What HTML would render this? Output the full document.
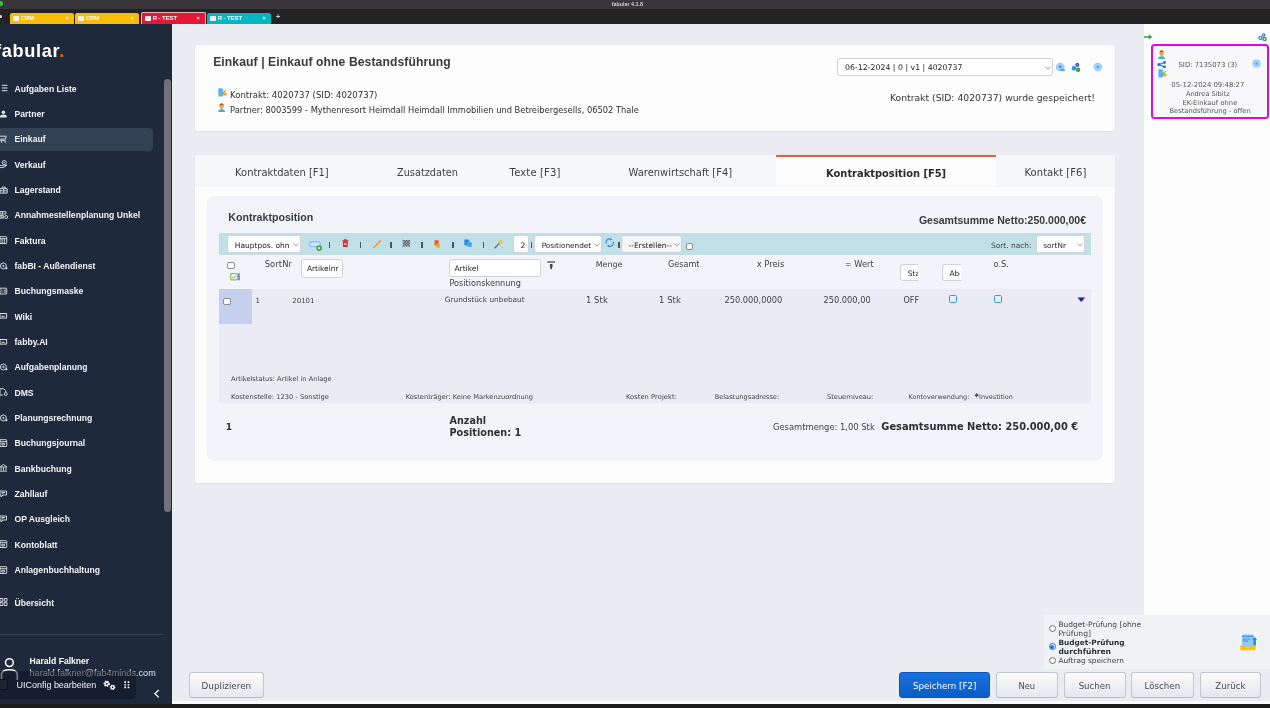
<!DOCTYPE html>
<html lang="de">
<head>
<meta charset="utf-8">
<title>fabular 4.1.8</title>
<style>
*{box-sizing:border-box;margin:0;padding:0}
html,body{width:1270px;height:708px;overflow:hidden;background:#ebecf1}
body{position:relative;font-family:"DejaVu Sans","Liberation Sans",sans-serif;color:#404040;font-size:9px}
.abs{position:absolute}
#wrap{position:absolute;left:0;top:0;width:1270px;height:708px;overflow:hidden;will-change:transform}
.lib{font-family:"Liberation Sans",sans-serif}
/* ---------- window chrome ---------- */
#titlebar{left:0;top:0;width:1270px;height:9px;background:#38353b}
#titlebar span{position:absolute;left:0;width:1270px;top:0;text-align:center;font:bold 5px/8px "Liberation Sans",sans-serif;color:#d8d8d8}
#tabbar{left:0;top:9px;width:1270px;height:15px;background:#232323}
.wtab{position:absolute;top:13px;height:11px;width:64px;border-radius:2px 2px 0 0;font:bold 6px/11.500px "Liberation Sans",sans-serif;color:#fff;letter-spacing:-0.100px}
.wtab i{position:absolute;left:3.200px;top:2.700px;width:5.800px;height:5.800px;background:linear-gradient(90deg,#f0f0f0 30%,#c9c9c9 30%,#c9c9c9 37%,#f0f0f0 37%,#f0f0f0 63%,#c9c9c9 63%,#c9c9c9 70%,#f0f0f0 70%);border-radius:0.800px}
.wtab b{position:absolute;left:10.800px;top:0}
.wtab u{position:absolute;right:5.500px;top:0;text-decoration:none;font-size:5.500px}
#bottombar{left:0;top:704.300px;width:1270px;height:4px;background:#1b1b1b}
/* ---------- sidebar ---------- */
#side{left:0;top:24px;width:172px;height:680.300px;background:#1e293b;overflow:hidden}
#logo{left:-5px;top:15px;font:bold 20px/22px "Liberation Sans",sans-serif;color:#fff;letter-spacing:-0.2px}
#logo em{color:#f26a1b;font-style:normal}
.mi{position:absolute;left:14px;font:bold 9px/12px "Liberation Sans",sans-serif;color:#f4f6f9;white-space:nowrap}
.ic{position:absolute;left:0.800px;width:7px;height:8px;overflow:visible}
#active{left:-4px;top:104px;width:157px;height:23px;background:#334155;border-radius:4px}
#sb{left:164px;top:55px;width:7px;height:433px;background:#6f7277;border-radius:4px}
#sbtrack{left:163px;top:24px;width:9px;height:585px;background:#1c2636}
#sep{left:0;top:609.800px;width:163px;height:1px;background:#334155}

/* ---------- main ---------- */
.card{position:absolute;background:#fdfdfd;border-radius:4px;box-shadow:0 1px 3px rgba(0,0,0,.05)}
.t{position:absolute;white-space:nowrap}
.sel{position:absolute;background:#fff;border:1px solid #cfd3d9;border-radius:3px;white-space:nowrap;overflow:hidden;font-size:7.5px;color:#222}
.inp{position:absolute;background:#fff;border:1px solid #cfd3d9;border-radius:3px;white-space:nowrap;overflow:hidden;font-size:7.5px;color:#222}
.btn{position:absolute;top:672.300px;height:25.400px;border:1px solid #c2c6ce;border-bottom-color:#b6bbc5;border-radius:3px;background:linear-gradient(#fbfbfc,#e5e7ec);font-size:9.5px;line-height:23px;text-align:center;color:#333}
.tab{position:absolute;top:155px;height:31px;line-height:33px;font-size:11px;text-align:center;color:#333;white-space:nowrap}
.rb{position:absolute;width:7.400px;height:7.400px;border:1px solid #767676;border-radius:50%;background:#fff}
.cb{position:absolute;width:7.400px;height:7.400px;border:1px solid #8c8c8c;border-radius:2px;background:#fff}
.sep{position:absolute;top:241.900px;width:1.600px;height:6.100px;background:#50555c}
</style>
</head>
<body>
<div id="wrap">
<div id="titlebar" class="abs"></div>
<div id="tabbar" class="abs"></div>
<div class="abs" style="left:-2.200px;top:1.200px;width:5.200px;height:5.200px;background:#2fc840;border-radius:50%"></div>
<div class="abs" style="left:0;top:15px;width:2px;height:3px;background:#ddd;border-radius:0 2px 2px 0"></div>
<div class="wtab" style="left:10px;background:#fbbc05"><i></i><b>CRM</b><u>×</u></div>
<div class="wtab" style="left:75px;background:#fbbc05"><i></i><b>CRM</b><u>×</u></div>
<div class="wtab" style="left:141px;top:11.5px;height:12.5px;width:65px;background:#e31837;border:1px solid #f3b6c0;border-bottom:0;line-height:11px"><i style="top:3.200px"></i><b>R - TEST</b><u>×</u></div>
<div class="wtab" style="left:207px;background:#00b7c3"><i></i><b>R - TEST</b><u>×</u></div>
<div class="abs lib" style="left:276px;top:13.300px;font:bold 7px/8px 'Liberation Sans',sans-serif;color:#ddd">+</div>

<!-- SIDEBAR -->
<div id="side" class="abs">
  <div id="active" class="abs"></div>
  <div id="sb" class="abs"></div>
  <div id="sep" class="abs"></div>
  <svg class="ic" style="top:60.3px" viewBox="0 0 7 8"><path d="M0.800 1.300h5.600M0.800 4h5.600M0.800 6.700h5.600" stroke="#dfe4ea" stroke-width="1" fill="none"/></svg>
  <svg class="ic" style="top:85.6px" viewBox="0 0 7 8"><circle cx="2.400" cy="2.200" r="1.700" fill="#dfe4ea"/><path d="M-1 7.600v-1c0-1.400 1.700-2.100 3.400-2.100s3.400 0.700 3.400 2.100v1z" fill="#dfe4ea"/></svg>
  <svg class="ic" style="top:111.0px" viewBox="0 0 7 8"><path d="M-1 1.200h6.300l-0.900 2.900h-5M0.300 4.100l-0.600 1.500h5" stroke="#dfe4ea" stroke-width="0.900" fill="none"/><circle cx="0.500" cy="7" r="0.750" fill="#dfe4ea"/><circle cx="4.300" cy="7" r="0.750" fill="#dfe4ea"/></svg>
  <svg class="ic" style="top:136.3px" viewBox="0 0 7 8"><circle cx="3.200" cy="2.600" r="2.100" stroke="#dfe4ea" stroke-width="0.900" fill="none"/><path d="M-1 5.500h2.500l1.500 0.700l2.800-1.200M-1 7.500c2.500 0.500 5-0.500 6.800-2.500" stroke="#dfe4ea" stroke-width="0.900" fill="none"/><path d="M2.300 2.600h1.800" stroke="#dfe4ea" stroke-width="0.800"/></svg>
  <svg class="ic" style="top:161.6px" viewBox="0 0 7 8"><path d="M-1 2.600h7.200v4.500h-7.200zM1.200 2.600v-1.600h3v1.600M-1 4.800h7.200M2.700 2.600v4.500" stroke="#dfe4ea" stroke-width="0.900" fill="none"/></svg>
  <svg class="ic" style="top:187.0px" viewBox="0 0 7 8"><path d="M-1 0.600h5.800v2.400h-5.800zM-1 4.600h3.400v2.500h-3.400zM1.600 0.600v2.400M0.800 4.600v2.500" stroke="#dfe4ea" stroke-width="0.900" fill="none"/><circle cx="5.200" cy="6" r="1.500" stroke="#dfe4ea" stroke-width="0.900" fill="none"/></svg>
  <svg class="ic" style="top:212.3px" viewBox="0 0 7 8"><path d="M-1 0.700h6.100c0.400 0 0.600 0.200 0.600 0.600v5.600c0 0.400-0.200 0.600-0.600 0.600h-6.100zM-1 2.700h6.600M1.100 2.700v4.800M3.300 2.700v4.800" stroke="#dfe4ea" stroke-width="0.900" fill="none"/></svg>
  <svg class="ic" style="top:237.6px" viewBox="0 0 7 8"><circle cx="2.400" cy="4" r="3" stroke="#dfe4ea" stroke-width="0.900" fill="none"/><path d="M1.200 4h2.400M2.400 2.800v2.400" stroke="#dfe4ea" stroke-width="0.800" fill="none"/><circle cx="5.500" cy="6.200" r="1" fill="#dfe4ea"/></svg>
  <svg class="ic" style="top:263.0px" viewBox="0 0 7 8"><path d="M-1 1.200h6.100c0.400 0 0.600 0.200 0.600 0.600v4.600c0 0.400-0.200 0.600-0.600 0.600h-6.100zM0.300 3.200h1.200M2.700 3.200h2.300M0.300 5h1.200M2.700 5h2.300" stroke="#dfe4ea" stroke-width="0.900" fill="none"/></svg>
  <svg class="ic" style="top:288.3px" viewBox="0 0 7 8"><path d="M-1 1.500h6.600v4.600h-6.600zM0.600 4.300h3" stroke="#dfe4ea" stroke-width="1" fill="none"/></svg>
  <svg class="ic" style="top:313.6px" viewBox="0 0 7 8"><path d="M-1 1.500h6.600v4.600h-6.600zM0.600 4.300h3" stroke="#dfe4ea" stroke-width="1" fill="none"/></svg>
  <svg class="ic" style="top:339.0px" viewBox="0 0 7 8"><circle cx="2.400" cy="4" r="3" stroke="#dfe4ea" stroke-width="0.900" fill="none"/><path d="M1.200 4h2.400M2.400 2.800v2.400" stroke="#dfe4ea" stroke-width="0.800" fill="none"/><circle cx="5.500" cy="6.200" r="1" fill="#dfe4ea"/></svg>
  <svg class="ic" style="top:364.3px" viewBox="0 0 7 8"><path d="M-1 0.800h3.800l2 2v1.200M-1 0.800v6.300h2.800" stroke="#dfe4ea" stroke-width="0.900" fill="none"/><circle cx="4.700" cy="6" r="1.500" stroke="#dfe4ea" stroke-width="0.900" fill="none"/></svg>
  <svg class="ic" style="top:389.6px" viewBox="0 0 7 8"><circle cx="2.400" cy="4" r="3" stroke="#dfe4ea" stroke-width="0.900" fill="none"/><path d="M1.200 4h2.400M2.400 2.800v2.400" stroke="#dfe4ea" stroke-width="0.800" fill="none"/><circle cx="5.500" cy="6.200" r="1" fill="#dfe4ea"/></svg>
  <svg class="ic" style="top:415.0px" viewBox="0 0 7 8"><path d="M-1 0.700h6.100c0.400 0 0.600 0.200 0.600 0.600v5.600c0 0.400-0.200 0.600-0.600 0.600h-6.100zM-1 2.700h6.600M0.800 4.300h2.600v1.700h-2.600z" stroke="#dfe4ea" stroke-width="0.900" fill="none"/></svg>
  <svg class="ic" style="top:440.3px" viewBox="0 0 7 8"><path d="M-1 3l3.500-2.500l3.500 2.500zM0 3.500v3M2.500 3.500v3M5 3.500v3M-1 7.200h7" stroke="#dfe4ea" stroke-width="0.900" fill="none"/></svg>
  <svg class="ic" style="top:465.6px" viewBox="0 0 7 8"><path d="M-1 1h6.500v4h-3.500l-2 2v-2h-1zM0.500 2.500h3.500M0.500 3.800h2" stroke="#dfe4ea" stroke-width="0.900" fill="none"/></svg>
  <svg class="ic" style="top:491.0px" viewBox="0 0 7 8"><path d="M-1 1h6.500v4h-3.500l-2 2v-2h-1zM0.500 2.500h3.500M0.500 3.800h2" stroke="#dfe4ea" stroke-width="0.900" fill="none"/></svg>
  <svg class="ic" style="top:516.3px" viewBox="0 0 7 8"><path d="M-1 0.700h6.100c0.400 0 0.600 0.200 0.600 0.600v5.600c0 0.400-0.200 0.600-0.600 0.600h-6.100zM-1 2.700h6.600M0.800 4.300h2.600v1.700h-2.600z" stroke="#dfe4ea" stroke-width="0.900" fill="none"/></svg>
  <svg class="ic" style="top:541.6px" viewBox="0 0 7 8"><path d="M-1 0.700h6.100c0.400 0 0.600 0.200 0.600 0.600v5.600c0 0.400-0.200 0.600-0.600 0.600h-6.100zM-1 2.700h6.600M0.800 4.300h2.600v1.700h-2.600z" stroke="#dfe4ea" stroke-width="0.900" fill="none"/></svg>
  <svg class="ic" style="top:574.3px" viewBox="0 0 7 8"><path d="M-1 0.500h2.800v2.800h-2.800zM3.200 0.500h2.800v2.800h-2.800zM-1 4.700h2.800v2.800h-2.800zM3.200 4.700h2.800v2.800h-2.800z" stroke="#dfe4ea" stroke-width="0.900" fill="none"/></svg>
  <svg class="abs" style="left:0;top:632px;width:20px;height:24px" viewBox="0 0 20 24"><circle cx="9.400" cy="6.600" r="3.900" stroke="#f1f5f9" stroke-width="1.600" fill="none"/><path d="M1.500 24v-5.500c0-3.200 2.800-4.700 7.900-4.700s7.900 1.500 7.900 4.700v5.500" stroke="#f1f5f9" stroke-width="1.600" fill="none"/></svg>
</div>

<!-- header card -->
<div class="card" style="left:195px;top:44.600px;width:920px;height:86.200px"></div>
<div class="sel" style="left:837px;top:58px;width:216px;height:18px"></div>

<!-- tab card -->
<div class="card" style="left:195px;top:155px;width:920px;height:328px"></div>
<div class="abs" style="left:195px;top:155px;width:920px;height:31.500px;background:#f6f7f9;border-radius:4px 4px 0 0"></div>
<div class="abs" style="left:776.300px;top:154.800px;width:220px;height:31.700px;background:#fdfdfd;border-top:2.500px solid #e0623a"></div>

<!-- inner panel -->
<div class="abs" style="left:207px;top:196px;width:895.500px;height:265px;background:#f3f4f9;border-radius:7px"></div>
<!-- toolbar -->
<div class="abs" style="left:219px;top:233px;width:872px;height:22px;background:#c1dfe7"></div>
<div class="sel" style="left:227px;top:235px;width:74px;height:18px"></div>
<div class="sep" style="left:328.8px"></div><div class="sep" style="left:359.7px"></div><div class="sep" style="left:390.4px"></div><div class="sep" style="left:421.2px"></div><div class="sep" style="left:452.0px"></div><div class="sep" style="left:482.5px"></div>
<div class="inp" style="left:513px;top:235px;width:16px;height:18px"></div>
<div class="sep" style="left:530.900px"></div>
<div class="sel" style="left:534.200px;top:235px;width:67.800px;height:18px"></div>
<div class="sep" style="left:618.100px"></div>
<div class="sel" style="left:621.200px;top:235px;width:60.700px;height:18px;background:#f4f5f7"></div>
<div class="cb" style="left:685.600px;top:242.500px"></div>
<div class="sel" style="left:1035.600px;top:235px;width:49.400px;height:18px"></div>
<!-- header row -->
<div class="cb" style="left:227.400px;top:262px"></div>
<div class="inp" style="left:301.300px;top:259.300px;width:42px;height:18.300px"></div>
<div class="inp" style="left:449.200px;top:258.500px;width:92.200px;height:18.200px"></div>
<div class="inp" style="left:899.600px;top:263.700px;width:18.300px;height:17.800px;border-right:0;border-radius:3px 0 0 3px"></div>
<div class="inp" style="left:942.300px;top:263.700px;width:18.300px;height:17.800px;border-right:0;border-radius:3px 0 0 3px"></div>
<!-- data row -->
<div class="abs" style="left:219px;top:289.300px;width:872px;height:113.400px;background:#ebebf5"></div>
<div class="abs" style="left:219px;top:289.300px;width:33.100px;height:34.700px;background:#c5cfee"></div>
<div class="cb" style="left:223.300px;top:298px"></div>
<div class="abs" style="left:949.100px;top:295.200px;width:8.200px;height:8.200px;border:1.700px solid #3097ee;border-radius:1.500px;background:#e3f0fd"></div>
<div class="abs" style="left:994.200px;top:295.200px;width:8.200px;height:8.200px;border:1.700px solid #3097ee;border-radius:1.500px;background:#e3f0fd"></div>
<svg class="abs" style="left:1076.500px;top:296.500px;width:9px;height:6px" viewBox="0 0 9 6"><path d="M0.500 0.500h7.600l-3.800 4.600z" fill="#1c1ca8"/></svg>

<!-- right panel -->
<div class="abs" style="left:1143.500px;top:24px;width:127px;height:590.700px;background:#fdfdfd"></div>
<div class="abs" style="left:1151.200px;top:43.800px;width:118px;height:75.300px;border:2.100px solid #e208df;border-radius:3.500px;background:#f8f8fa"></div>

<!-- budget panel -->
<div class="abs" style="left:1043.500px;top:614.700px;width:227px;height:54.700px;background:#f1f2f6"></div>
<div class="rb" style="left:1048.600px;top:624.900px"></div>
<div class="rb" style="left:1048.600px;top:642.900px;border-color:#1a6fe0"></div>
<div class="abs" style="left:1050.300px;top:644.600px;width:4px;height:4px;border-radius:50%;background:#1a6fe0"></div>
<div class="rb" style="left:1048.600px;top:656.800px"></div>

<!-- buttons -->
<div class="btn" style="left:189px;width:74.600px"></div>
<div class="btn" style="left:899px;width:90.600px;background:linear-gradient(#1873e0,#0c5bc6);border-color:#0c56ba"></div>
<div class="btn" style="left:995.800px;width:62px"></div>
<div class="btn" style="left:1063.700px;width:62px"></div>
<div class="btn" style="left:1131.400px;width:62.200px"></div>
<div class="btn" style="left:1199.700px;width:61.700px"></div>

<svg class="abs" style="left:1044.60px;top:65.60px;width:6px;height:4px" viewBox="0 0 6 4"><path d="M0.500 0.600l2.500 2.500l2.500-2.500" fill="none" stroke="#85898f" stroke-width="0.850"/></svg>
<svg class="abs" style="left:292.60px;top:242.60px;width:6px;height:4px" viewBox="0 0 6 4"><path d="M0.500 0.600l2.500 2.500l2.500-2.500" fill="none" stroke="#85898f" stroke-width="0.850"/></svg>
<svg class="abs" style="left:593.60px;top:242.60px;width:6px;height:4px" viewBox="0 0 6 4"><path d="M0.500 0.600l2.500 2.500l2.500-2.500" fill="none" stroke="#85898f" stroke-width="0.850"/></svg>
<svg class="abs" style="left:673.50px;top:242.60px;width:6px;height:4px" viewBox="0 0 6 4"><path d="M0.500 0.600l2.500 2.500l2.500-2.500" fill="none" stroke="#85898f" stroke-width="0.850"/></svg>
<svg class="abs" style="left:1076.60px;top:242.60px;width:6px;height:4px" viewBox="0 0 6 4"><path d="M0.500 0.600l2.500 2.500l2.500-2.500" fill="none" stroke="#85898f" stroke-width="0.850"/></svg>
<div class="t" style="left:213.20px;top:55.01px;font-size:12.14px;line-height:15.79px;letter-spacing:0.099px;font-family:'Liberation Sans',sans-serif;font-weight:bold;color:#3a3a3a">Einkauf | Einkauf ohne Bestandsführung</div>
<div class="t" style="left:230.00px;top:89.71px;font-size:8.50px;line-height:11.05px;letter-spacing:0.024px;color:#2e2e2e">Kontrakt: 4020737 (SID: 4020737)</div>
<div class="t" style="left:230.00px;top:104.51px;font-size:8.30px;line-height:10.79px;color:#2e2e2e">Partner: 8003599 - Mythenresort Heimdall Heimdall Immobilien und Betreibergesells, 06502 Thale</div>
<div class="t" style="left:845.00px;top:63.20px;font-size:7.79px;line-height:10.13px;letter-spacing:0.012px;color:#222">06-12-2024 | 0 | v1 | 4020737</div>
<div class="t" style="left:889.90px;top:91.71px;font-size:9.25px;line-height:12.02px;color:#333">Kontrakt (SID: 4020737) wurde gespeichert!</div>
<div class="t" style="left:235.10px;top:166.81px;font-size:9.94px;line-height:12.92px">Kontraktdaten [F1]</div>
<div class="t" style="left:397.00px;top:166.81px;font-size:9.75px;line-height:12.67px">Zusatzdaten</div>
<div class="t" style="left:509.60px;top:165.81px;font-size:10.02px;line-height:13.02px;letter-spacing:0.137px">Texte [F3]</div>
<div class="t" style="left:628.50px;top:166.81px;font-size:9.95px;line-height:12.94px">Warenwirtschaft [F4]</div>
<div class="t" style="left:826.10px;top:167.80px;font-size:9.90px;line-height:12.87px;font-weight:bold;color:#2b2b2b">Kontraktposition [F5]</div>
<div class="t" style="left:1024.50px;top:165.81px;font-size:10.02px;line-height:13.02px;letter-spacing:0.037px">Kontakt [F6]</div>
<div class="t" style="left:228.30px;top:210.81px;font-size:10.63px;line-height:13.81px;font-family:'Liberation Sans',sans-serif;font-weight:bold;color:#3a3a3a">Kontraktposition</div>
<div class="t" style="left:918.90px;top:213.81px;font-size:10.52px;line-height:13.67px;font-family:'Liberation Sans',sans-serif;font-weight:bold;color:#3a3a3a">Gesamtsumme Netto:250.000,00€</div>
<div class="t" style="left:990.90px;top:240.61px;font-size:7.48px;line-height:9.73px">Sort. nach:</div>
<div class="t" style="left:264.70px;top:259.42px;font-size:8.40px;line-height:10.92px;letter-spacing:0.069px">SortNr</div>
<div class="t" style="left:449.40px;top:278.30px;font-size:8.18px;line-height:10.63px">Positionskennung</div>
<div class="t" style="left:595.70px;top:260.41px;font-size:7.94px;line-height:10.32px">Menge</div>
<div class="t" style="left:668.00px;top:259.41px;font-size:8.10px;line-height:10.53px">Gesamt</div>
<div class="t" style="left:756.70px;top:259.42px;font-size:8.40px;line-height:10.92px">x Preis</div>
<div class="t" style="left:844.80px;top:259.40px;font-size:8.22px;line-height:10.68px">= Wert</div>
<div class="t" style="left:993.50px;top:259.41px;font-size:8.31px;line-height:10.81px">o.S.</div>
<div class="t" style="left:255.40px;top:295.70px;font-size:7.07px;line-height:9.19px">1</div>
<div class="t" style="left:292.20px;top:295.70px;font-size:7.04px;line-height:9.15px">20101</div>
<div class="t" style="left:444.80px;top:294.90px;font-size:7.35px;line-height:9.55px">Grundstück unbebaut</div>
<div class="t" style="left:585.90px;top:295.11px;font-size:8.40px;line-height:10.92px;letter-spacing:0.099px">1 Stk</div>
<div class="t" style="left:659.00px;top:295.11px;font-size:8.40px;line-height:10.92px;letter-spacing:0.099px">1 Stk</div>
<div class="t" style="left:724.40px;top:295.11px;font-size:8.25px;line-height:10.72px">250.000,0000</div>
<div class="t" style="left:823.40px;top:295.31px;font-size:8.28px;line-height:10.76px">250.000,00</div>
<div class="t" style="left:903.50px;top:296.10px;font-size:8.05px;line-height:10.47px">OFF</div>
<div class="t" style="left:231.10px;top:374.60px;font-size:6.65px;line-height:8.65px">Artikelstatus: Artikel in Anlage</div>
<div class="t" style="left:231.10px;top:392.81px;font-size:6.68px;line-height:8.68px;letter-spacing:0.011px">Kostenstelle: 1230 - Sonstige</div>
<div class="t" style="left:405.70px;top:392.81px;font-size:6.65px;line-height:8.64px">Kostenträger: Keine Markenzuordnung</div>
<div class="t" style="left:625.90px;top:392.81px;font-size:6.68px;line-height:8.68px;letter-spacing:0.079px">Kosten Projekt:</div>
<div class="t" style="left:714.70px;top:392.81px;font-size:6.60px;line-height:8.58px">Belastungsadresse:</div>
<div class="t" style="left:827.00px;top:392.81px;font-size:6.63px;line-height:8.61px">Steuerniveau:</div>
<div class="t" style="left:908.50px;top:392.81px;font-size:6.48px;line-height:8.43px">Kontoverwendung: <b style="font-size:1.3em;line-height:0;position:relative;top:0.2em;margin:0 0.02em 0 0.35em;color:#2f2f2f">*</b>Investition</div>
<div class="t" style="left:225.70px;top:422.21px;font-size:9.11px;line-height:11.85px;font-weight:bold;color:#2f2f2f">1</div>
<div class="t" style="left:449.50px;top:415.40px;font-size:9.64px;line-height:12.53px;font-weight:bold;color:#2f2f2f">Anzahl</div>
<div class="t" style="left:449.50px;top:426.62px;font-size:9.69px;line-height:12.59px;font-weight:bold;color:#2f2f2f">Positionen: 1</div>
<div class="t" style="left:773.00px;top:421.90px;font-size:8.37px;line-height:10.88px">Gesamtmenge: 1,00 Stk</div>
<div class="t" style="left:881.30px;top:421.20px;font-size:9.86px;line-height:12.82px;font-weight:bold;color:#2f2f2f">Gesamtsumme Netto: 250.000,00 €</div>
<div class="t" style="left:1178.50px;top:60.52px;font-size:6.88px;line-height:8.95px;color:#555">SID: 7135073 (3)</div>
<div class="t" style="left:1171.30px;top:81.22px;font-size:6.88px;line-height:8.95px;color:#555">05-12-2024 09:48:27</div>
<div class="t" style="left:1185.90px;top:89.71px;font-size:6.61px;line-height:8.59px;color:#555">Andrea Sibitz</div>
<div class="t" style="left:1182.50px;top:98.70px;font-size:6.68px;line-height:8.68px;letter-spacing:0.069px;color:#555">EK-Einkauf ohne</div>
<div class="t" style="left:1169.50px;top:107.20px;font-size:6.68px;line-height:8.68px;letter-spacing:0.018px;color:#555">Bestandsführung - offen</div>
<div class="t" style="left:1058.40px;top:619.71px;font-size:7.49px;line-height:9.73px">Budget-Prüfung [ohne</div>
<div class="t" style="left:1058.40px;top:628.61px;font-size:7.59px;line-height:9.87px;letter-spacing:0.022px">Prüfung]</div>
<div class="t" style="left:1058.40px;top:637.81px;font-size:7.35px;line-height:9.56px;font-weight:bold;color:#2f2f2f">Budget-Prüfung</div>
<div class="t" style="left:1058.40px;top:646.71px;font-size:7.55px;line-height:9.81px;font-weight:bold;color:#2f2f2f">durchführen</div>
<div class="t" style="left:1058.40px;top:656.40px;font-size:7.36px;line-height:9.57px">Auftrag speichern</div>
<div class="t" style="left:201.60px;top:680.60px;font-size:8.78px;line-height:11.41px;color:#434a59">Duplizieren</div>
<div class="t" style="left:912.90px;top:680.61px;font-size:8.70px;line-height:11.31px;color:#fff">Speichern [F2]</div>
<div class="t" style="left:1018.50px;top:680.61px;font-size:8.31px;line-height:10.81px;color:#434a59">Neu</div>
<div class="t" style="left:1078.70px;top:680.61px;font-size:8.56px;line-height:11.13px;color:#434a59">Suchen</div>
<div class="t" style="left:1144.60px;top:680.61px;font-size:8.67px;line-height:11.27px;color:#434a59">Löschen</div>
<div class="t" style="left:1215.30px;top:680.60px;font-size:8.62px;line-height:11.2px;color:#434a59">Zurück</div>
<div class="t" style="left:234.80px;top:240.60px;font-size:7.50px;line-height:9.75px;color:#222;overflow:hidden;width:54.80px">Hauptpos. ohne</div>
<div class="t" style="left:520.50px;top:240.61px;font-size:7.59px;line-height:9.87px;color:#222">2</div>
<div class="t" style="left:541.70px;top:240.61px;font-size:7.31px;line-height:9.5px;color:#222">Positionendet</div>
<div class="t" style="left:628.50px;top:240.61px;font-size:7.48px;line-height:9.72px;color:#222;overflow:hidden;width:47.00px">--Erstellen--</div>
<div class="t" style="left:1043.30px;top:240.60px;font-size:7.33px;line-height:9.53px;color:#222">sortNr</div>
<div class="t" style="left:307.00px;top:264.11px;font-size:7.42px;line-height:9.64px;color:#222">Artikelnr</div>
<div class="t" style="left:454.40px;top:263.71px;font-size:7.56px;line-height:9.83px;color:#222">Artikel</div>
<div class="t" style="left:907.70px;top:269.01px;font-size:7.50px;line-height:9.75px;color:#222;overflow:hidden;width:10.20px">Status</div>
<div class="t" style="left:949.40px;top:269.01px;font-size:7.50px;line-height:9.75px;color:#222;overflow:hidden;width:11.00px">Abg</div>
<div class="t" style="left:14.50px;top:83.61px;font-size:8.60px;line-height:11.18px;font-family:'Liberation Sans',sans-serif;font-weight:bold;color:#f3f5f8">Aufgaben Liste</div>
<div class="t" style="left:14.50px;top:108.94px;font-size:8.60px;line-height:11.18px;font-family:'Liberation Sans',sans-serif;font-weight:bold;color:#f3f5f8">Partner</div>
<div class="t" style="left:14.50px;top:134.27px;font-size:8.60px;line-height:11.18px;font-family:'Liberation Sans',sans-serif;font-weight:bold;color:#f3f5f8">Einkauf</div>
<div class="t" style="left:14.50px;top:159.61px;font-size:8.60px;line-height:11.18px;font-family:'Liberation Sans',sans-serif;font-weight:bold;color:#f3f5f8">Verkauf</div>
<div class="t" style="left:14.50px;top:184.93px;font-size:8.60px;line-height:11.18px;font-family:'Liberation Sans',sans-serif;font-weight:bold;color:#f3f5f8">Lagerstand</div>
<div class="t" style="left:14.50px;top:210.27px;font-size:8.60px;line-height:11.18px;font-family:'Liberation Sans',sans-serif;font-weight:bold;color:#f3f5f8">Annahmestellenplanung Unkel</div>
<div class="t" style="left:14.50px;top:235.61px;font-size:8.60px;line-height:11.18px;font-family:'Liberation Sans',sans-serif;font-weight:bold;color:#f3f5f8">Faktura</div>
<div class="t" style="left:14.50px;top:260.93px;font-size:8.60px;line-height:11.18px;font-family:'Liberation Sans',sans-serif;font-weight:bold;color:#f3f5f8">fabBI - Außendienst</div>
<div class="t" style="left:14.50px;top:286.27px;font-size:8.60px;line-height:11.18px;font-family:'Liberation Sans',sans-serif;font-weight:bold;color:#f3f5f8">Buchungsmaske</div>
<div class="t" style="left:14.50px;top:311.61px;font-size:8.60px;line-height:11.18px;font-family:'Liberation Sans',sans-serif;font-weight:bold;color:#f3f5f8">Wiki</div>
<div class="t" style="left:14.50px;top:336.93px;font-size:8.60px;line-height:11.18px;font-family:'Liberation Sans',sans-serif;font-weight:bold;color:#f3f5f8">fabby.AI</div>
<div class="t" style="left:14.50px;top:362.27px;font-size:8.60px;line-height:11.18px;font-family:'Liberation Sans',sans-serif;font-weight:bold;color:#f3f5f8">Aufgabenplanung</div>
<div class="t" style="left:14.50px;top:387.61px;font-size:8.60px;line-height:11.18px;font-family:'Liberation Sans',sans-serif;font-weight:bold;color:#f3f5f8">DMS</div>
<div class="t" style="left:14.50px;top:412.93px;font-size:8.60px;line-height:11.18px;font-family:'Liberation Sans',sans-serif;font-weight:bold;color:#f3f5f8">Planungsrechnung</div>
<div class="t" style="left:14.50px;top:438.27px;font-size:8.60px;line-height:11.18px;font-family:'Liberation Sans',sans-serif;font-weight:bold;color:#f3f5f8">Buchungsjournal</div>
<div class="t" style="left:14.50px;top:463.60px;font-size:8.60px;line-height:11.18px;font-family:'Liberation Sans',sans-serif;font-weight:bold;color:#f3f5f8">Bankbuchung</div>
<div class="t" style="left:14.50px;top:488.93px;font-size:8.60px;line-height:11.18px;font-family:'Liberation Sans',sans-serif;font-weight:bold;color:#f3f5f8">Zahllauf</div>
<div class="t" style="left:14.50px;top:514.26px;font-size:8.60px;line-height:11.18px;font-family:'Liberation Sans',sans-serif;font-weight:bold;color:#f3f5f8">OP Ausgleich</div>
<div class="t" style="left:14.50px;top:539.60px;font-size:8.60px;line-height:11.18px;font-family:'Liberation Sans',sans-serif;font-weight:bold;color:#f3f5f8">Kontoblatt</div>
<div class="t" style="left:14.50px;top:564.92px;font-size:8.60px;line-height:11.18px;font-family:'Liberation Sans',sans-serif;font-weight:bold;color:#f3f5f8">Anlagenbuchhaltung</div>
<div class="t" style="left:14.50px;top:597.61px;font-size:8.60px;line-height:11.18px;font-family:'Liberation Sans',sans-serif;font-weight:bold;color:#f3f5f8">Übersicht</div>
<div class="t" style="left:-4.90px;top:39.91px;font-size:18.20px;line-height:23.66px;font-family:'Liberation Sans',sans-serif;font-weight:bold;color:#fff"><span style="letter-spacing:0.640px">fabular</span><span style="color:#fb5d08;margin-left:-1.100px">.</span></div>
<div class="t" style="left:29.50px;top:656.30px;font-size:8.61px;line-height:11.19px;font-family:'Liberation Sans',sans-serif;font-weight:bold;color:#fff">Harald Falkner</div>
<div class="t" style="left:29.50px;top:668.31px;font-size:9.11px;line-height:11.84px;letter-spacing:0.008px;font-family:'Liberation Sans',sans-serif;color:#e4e7ec">harald.falkner@fab4minds.com</div>
<div class="abs" style="left:0;top:671px;width:136px;height:27.700px;background:rgba(14,21,34,0.520);border-radius:0 4px 4px 0"></div>
<div class="abs" style="left:-3px;top:679px;width:10.600px;height:10.800px;border:1px solid #0c1018;border-radius:2px;background:#1d2534"></div>
<svg class="abs" style="left:103px;top:679.500px;width:13.500px;height:11px" viewBox="0 0 13.500 11"><circle cx="3.700" cy="3.700" r="2.300" fill="none" stroke="#fff" stroke-width="1.700" stroke-dasharray="1.200 0.850"/><circle cx="3.700" cy="3.700" r="1.700" fill="none" stroke="#fff" stroke-width="1.300"/><circle cx="9.600" cy="7.300" r="2" fill="none" stroke="#fff" stroke-width="1.500" stroke-dasharray="1.050 0.750"/><circle cx="9.600" cy="7.300" r="1.500" fill="none" stroke="#fff" stroke-width="1.100"/></svg>
<svg class="abs" style="left:124px;top:681.300px;width:6px;height:8px" viewBox="0 0 6 8"><g fill="#fff"><rect x="0.300" y="0.300" width="1.700" height="1.700" rx="0.300"/><rect x="3.600" y="0.300" width="1.700" height="1.700" rx="0.300"/><rect x="0.300" y="2.900" width="1.700" height="1.700" rx="0.300"/><rect x="3.600" y="2.900" width="1.700" height="1.700" rx="0.300"/><rect x="0.300" y="5.500" width="1.700" height="1.700" rx="0.300"/><rect x="3.600" y="5.500" width="1.700" height="1.700" rx="0.300"/></g></svg>
<svg class="abs" style="left:153px;top:688.500px;width:8px;height:9.500px" viewBox="0 0 8 9.500"><path d="M5.800 1l-3.900 3.700l3.900 3.700" stroke="#fff" stroke-width="1.300" fill="none"/></svg>
<div class="t" style="left:16.50px;top:679.91px;font-size:8.98px;line-height:11.68px;font-family:'Liberation Sans',sans-serif;color:#eef1f5">UIConfig bearbeiten</div>
<div class="t" style="left:611.80px;top:0.71px;font-size:5.35px;line-height:6.95px;font-family:'Liberation Sans',sans-serif;font-weight:bold;color:#d4d4d4">fabular 4.1.8</div>


<!-- header icons -->
<svg class="abs" style="left:218px;top:88.400px;width:9.500px;height:9px" viewBox="0 0 9.500 9"><path d="M0.300 0.200h3.700l1.200 1.200v7.100h-4.900z" fill="#64b5f6"/><path d="M1 1.500h2.500M1 3h2.500" stroke="#42a5f5" stroke-width="0.700"/><path d="M3.200 6.800c0.800-1.500 2.600-2.800 4-2.500c1 0.300 1.700 1.200 1.800 2.200c-0.800 1.200-3.500 1.500-5.800 0.300z" fill="#ffa726"/><path d="M3.200 6.600l4.300-4.100" stroke="#43a047" stroke-width="0.900" stroke-linecap="round"/></svg>
<svg class="abs" style="left:218.400px;top:102.800px;width:7.200px;height:9px" viewBox="0 0 7.200 9"><path d="M0.200 9c0-2 1.200-2.700 3.400-2.700s3.400 0.700 3.400 2.700z" fill="#29b6f6"/><path d="M2.800 5h1.600v1.600l-0.800 0.700l-0.800-0.700z" fill="#fb8c00"/><circle cx="3.600" cy="3.400" r="2.100" fill="#ffa726"/><path d="M1.500 3c0-1.800 0.900-2.800 2.100-2.800s2.100 1 2.100 2.800c-0.700-0.900-1.400-1.300-2.100-1.300s-1.400 0.400-2.100 1.300z" fill="#8d4e1f"/></svg>
<svg class="abs" style="left:1055.200px;top:62.200px;width:11px;height:10.500px" viewBox="0 0 11 10.500"><circle cx="5.200" cy="5" r="4.300" fill="#90caf9"/><circle cx="5.200" cy="5" r="2.800" fill="none" stroke="#bbdefb" stroke-width="0.700"/><circle cx="5.200" cy="4.800" r="1.200" fill="#2f8fea"/><path d="M6.200 8.100h3.100" stroke="#2196f3" stroke-width="1.500" stroke-linecap="round"/></svg>
<svg class="abs" style="left:1071.050px;top:62.100px;width:11px;height:11px" viewBox="0 0 11 11"><circle cx="6.300" cy="2.900" r="1.200" fill="none" stroke="#5c55c8" stroke-width="1.700"/><circle cx="2.900" cy="6.300" r="1.300" fill="none" stroke="#2196f3" stroke-width="1.900"/><circle cx="7.100" cy="7.700" r="1.300" fill="none" stroke="#43a047" stroke-width="2"/></svg>
<svg class="abs" style="left:1093px;top:62.100px;width:10px;height:10px" viewBox="0 0 10 10"><circle cx="4.900" cy="5" r="4.200" fill="#90caf9"/><circle cx="4.900" cy="5" r="2.700" fill="none" stroke="#bbdefb" stroke-width="0.700"/><circle cx="4.900" cy="4.900" r="1.100" fill="#3d9bf0"/></svg>

<!-- toolbar icons -->
<svg class="abs" style="left:309px;top:240.500px;width:14px;height:11px" viewBox="0 0 14 11"><rect x="0.900" y="0.900" width="10.300" height="4.800" rx="1.100" fill="#cfe6f6" stroke="#7cbcf7" stroke-width="1.100"/><circle cx="10.100" cy="7.100" r="2.800" fill="#43a047"/><circle cx="10.100" cy="7.100" r="1.100" fill="#fff"/></svg>
<svg class="abs" style="left:341.700px;top:239.300px;width:6.900px;height:8.300px" viewBox="0 0 7.500 8.500" preserveAspectRatio="none"><path d="M0.400 1.300h6.600v1.100h-6.600zM2.300 0.300h2.800v1h-2.800zM0.900 2.600h5.600l-0.400 5.600h-4.800z" fill="#c62828"/><path d="M2.600 4l2.200 2.400M4.800 4l-2.200 2.400" stroke="#fff" stroke-width="0.900"/></svg>
<svg class="abs" style="left:373px;top:239.500px;width:8.500px;height:8.500px" viewBox="0 0 8.500 8.500"><path d="M0.600 7.900l6.100-6.300" stroke="#fb9a0c" stroke-width="1.500" stroke-linecap="round"/><path d="M6.700 1.600l0.900-0.900" stroke="#ef8a80" stroke-width="1.300" stroke-linecap="round"/></svg>
<svg class="abs" style="left:401.500px;top:239px;width:9px;height:9px" viewBox="0 0 9 9"><path d="M0.600 0.200v8.600" stroke="#9fa8da" stroke-width="0.600"/><g fill="#4a4f55"><rect x="1.20" y="1.00" width="1.350" height="1.300"/><rect x="3.90" y="1.00" width="1.350" height="1.300"/><rect x="6.60" y="1.00" width="1.350" height="1.300"/><rect x="2.55" y="2.30" width="1.350" height="1.300"/><rect x="5.25" y="2.30" width="1.350" height="1.300"/><rect x="1.20" y="3.60" width="1.350" height="1.300"/><rect x="3.90" y="3.60" width="1.350" height="1.300"/><rect x="6.60" y="3.60" width="1.350" height="1.300"/><rect x="2.55" y="4.90" width="1.350" height="1.300"/><rect x="5.25" y="4.90" width="1.350" height="1.300"/><rect x="1.20" y="6.20" width="1.350" height="1.300"/><rect x="3.90" y="6.20" width="1.350" height="1.300"/><rect x="6.60" y="6.20" width="1.350" height="1.300"/></g><rect x="1.200" y="1" width="6.750" height="6.500" fill="#4a4f55" opacity="0.250"/></svg>
<svg class="abs" style="left:433.500px;top:239.500px;width:7px;height:8.500px" viewBox="0 0 7 8.500"><rect x="0.600" y="0.300" width="4.100" height="5" rx="0.500" fill="#f4511e"/><path d="M2.300 4.400c0.600-1 1.800-1.300 2.700-0.800c1.200 0.700 1.500 2.200 0.800 3.400c-0.700 1-2.200 1.300-3.200 0.500c-0.900-0.700-1-2.100-0.300-3.100z" fill="#ffa726"/></svg>
<svg class="abs" style="left:463.500px;top:239px;width:9px;height:8.500px" viewBox="0 0 9 8.500"><path d="M0.400 0.400h3.600l1.200 1.200v4.600h-4.800z" fill="#1e88e5"/><path d="M3.200 2.700h3.400l1.300 1.300v4.100h-4.700z" fill="#64a9f2"/><path d="M4.300 4.500h2.300M4.300 5.900h2.300" stroke="#1e88e5" stroke-width="0.600"/></svg>
<svg class="abs" style="left:493.500px;top:239.500px;width:10px;height:9px" viewBox="0 0 10 9"><path d="M0.900 8l4.700-5" stroke="#546e7a" stroke-width="1.100" stroke-linecap="round"/><circle cx="6.300" cy="2.100" r="1.700" fill="#ffca28"/><circle cx="6.300" cy="2.100" r="1.700" fill="none" stroke="#ffa726" stroke-width="0.600"/><circle cx="7" cy="5.400" r="0.500" fill="#ef8a50"/><circle cx="8.300" cy="7.300" r="0.600" fill="#ef8a50"/></svg>
<svg class="abs" style="left:604.500px;top:237.500px;width:9.500px;height:9.500px" viewBox="0 0 9.500 9.500"><path d="M1.300 5.800a3.500 3.500 0 0 1 5.200-4.200M8.100 3.600a3.500 3.500 0 0 1-5.200 4.200" fill="none" stroke="#2e8be8" stroke-width="1.100"/><path d="M5.700 0.300l1.700 1.500l-2.200 0.700zM3.700 9.200l-1.700-1.500l2.200-0.700z" fill="#2e8be8"/></svg>
<!-- header-row icons -->
<svg class="abs" style="left:230px;top:272.500px;width:10px;height:8px" viewBox="0 0 10 8"><rect x="0.700" y="0.700" width="6.800" height="6.200" rx="1.100" fill="#fff" stroke="#8bc34a" stroke-width="1.300"/><path d="M2.200 3.800l1.400 1.400l2.500-2.800" fill="none" stroke="#4c9a2a" stroke-width="0.900"/><rect x="8.100" y="0.300" width="1.700" height="7" fill="#7b78e0"/></svg>
<svg class="abs" style="left:547px;top:261.300px;width:8.500px;height:9px" viewBox="0 0 8.500 9"><path d="M0.200 1h7.800" stroke="#4a4a4a" stroke-width="1.300"/><path d="M2.900 3h2.600v2.300l-0.700 3h-1.100l-0.800-2.500z" fill="#4a4a4a"/></svg>

<!-- right panel icons -->
<svg class="abs" style="left:1144px;top:33.500px;width:9px;height:6px" viewBox="0 0 9 6"><path d="M0.300 2.900h5.500" stroke="#2e9e3e" stroke-width="1.500" stroke-linecap="round"/><path d="M4.800 0.300l3.400 2.600l-3.400 2.600z" fill="#2e9e3e"/></svg>
<svg class="abs" style="left:1257.500px;top:33px;width:9.500px;height:8.500px" viewBox="0 0 9.500 8.500"><circle cx="5.600" cy="1.900" r="1.200" fill="none" stroke="#5c55c8" stroke-width="1.100"/><circle cx="2.500" cy="4.900" r="1.500" fill="none" stroke="#2196f3" stroke-width="1.400"/><circle cx="6.600" cy="6" r="1.600" fill="none" stroke="#43a047" stroke-width="1.500"/></svg>
<svg class="abs" style="left:1157.800px;top:49.600px;width:7.200px;height:9px" viewBox="0 0 7.200 9"><path d="M0.200 9c0-2 1.200-2.700 3.400-2.700s3.400 0.700 3.400 2.700z" fill="#29b6f6"/><path d="M2.800 5h1.600v1.600l-0.800 0.700l-0.800-0.700z" fill="#fb8c00"/><circle cx="3.600" cy="3.400" r="2.100" fill="#ffa726"/><path d="M1.500 3c0-1.800 0.900-2.800 2.100-2.800s2.100 1 2.100 2.800c-0.700-0.900-1.400-1.300-2.100-1.300s-1.400 0.400-2.100 1.300z" fill="#8d4e1f"/></svg>
<svg class="abs" style="left:1157px;top:60.500px;width:9.500px;height:7.500px" viewBox="0 0 9.500 7.500"><path d="M7.400 1.400l-5.600 2.200l5.600 2.400" fill="none" stroke="#1e6fe0" stroke-width="1.100"/><circle cx="1.800" cy="3.600" r="1.500" fill="#1e6fe0"/><circle cx="7.500" cy="1.500" r="1.400" fill="#1e6fe0"/><circle cx="7.500" cy="5.900" r="1.400" fill="#1e6fe0"/></svg>
<svg class="abs" style="left:1157.700px;top:69px;width:9.500px;height:9px" viewBox="0 0 9.500 9"><path d="M0.300 0.200h3.700l1.200 1.200v7.100h-4.900z" fill="#64b5f6"/><path d="M1 1.500h2.500M1 3h2.500" stroke="#42a5f5" stroke-width="0.700"/><path d="M3.200 6.800c0.800-1.500 2.600-2.800 4-2.500c1 0.300 1.700 1.200 1.800 2.200c-0.800 1.200-3.500 1.500-5.800 0.300z" fill="#ffa726"/><path d="M3.200 6.600l4.300-4.100" stroke="#43a047" stroke-width="0.900" stroke-linecap="round"/></svg>
<svg class="abs" style="left:1251.500px;top:59.200px;width:9px;height:9px" viewBox="0 0 9 9"><circle cx="4.500" cy="4.500" r="4" fill="#90caf9"/><circle cx="4.500" cy="4.500" r="2.600" fill="none" stroke="#bbdefb" stroke-width="0.700"/><circle cx="4.500" cy="4.400" r="1" fill="#3d9bf0"/></svg>

<!-- budget icon -->
<svg class="abs" style="left:1239px;top:633px;width:20px;height:19px" viewBox="0 0 20 19"><rect x="0.500" y="0.500" width="18" height="17.500" rx="3" fill="#f8f9fc" opacity="0.850"/><rect x="2.800" y="1.600" width="11.900" height="13" rx="1.300" fill="#90caf9"/><rect x="2.800" y="2.600" width="11.900" height="1.500" fill="#42a5f5"/><path d="M4 6.200h3.200M8 6.200h2.800M4 8h4.800" stroke="#4a90e2" stroke-width="1"/><path d="M14.400 12.800v-6h-1.400l2.650-2.900l2.650 2.900h-1.400v6z" fill="#1e88e5"/><path d="M1.300 12.200h4.300c0.500 1.600 1.600 2.400 3.100 2.400s2.600-0.800 3.100-2.400h4.900v4c0 0.700-0.500 1.100-1.100 1.100h-13.200c-0.600 0-1.100-0.400-1.100-1.100z" fill="#ffc107"/></svg>



<div class="abs" style="left:172px;top:700.600px;width:1098px;height:4px;background:#fbfbfc"></div>
<div id="bottombar" class="abs"></div>
</div>
</body>
</html>
